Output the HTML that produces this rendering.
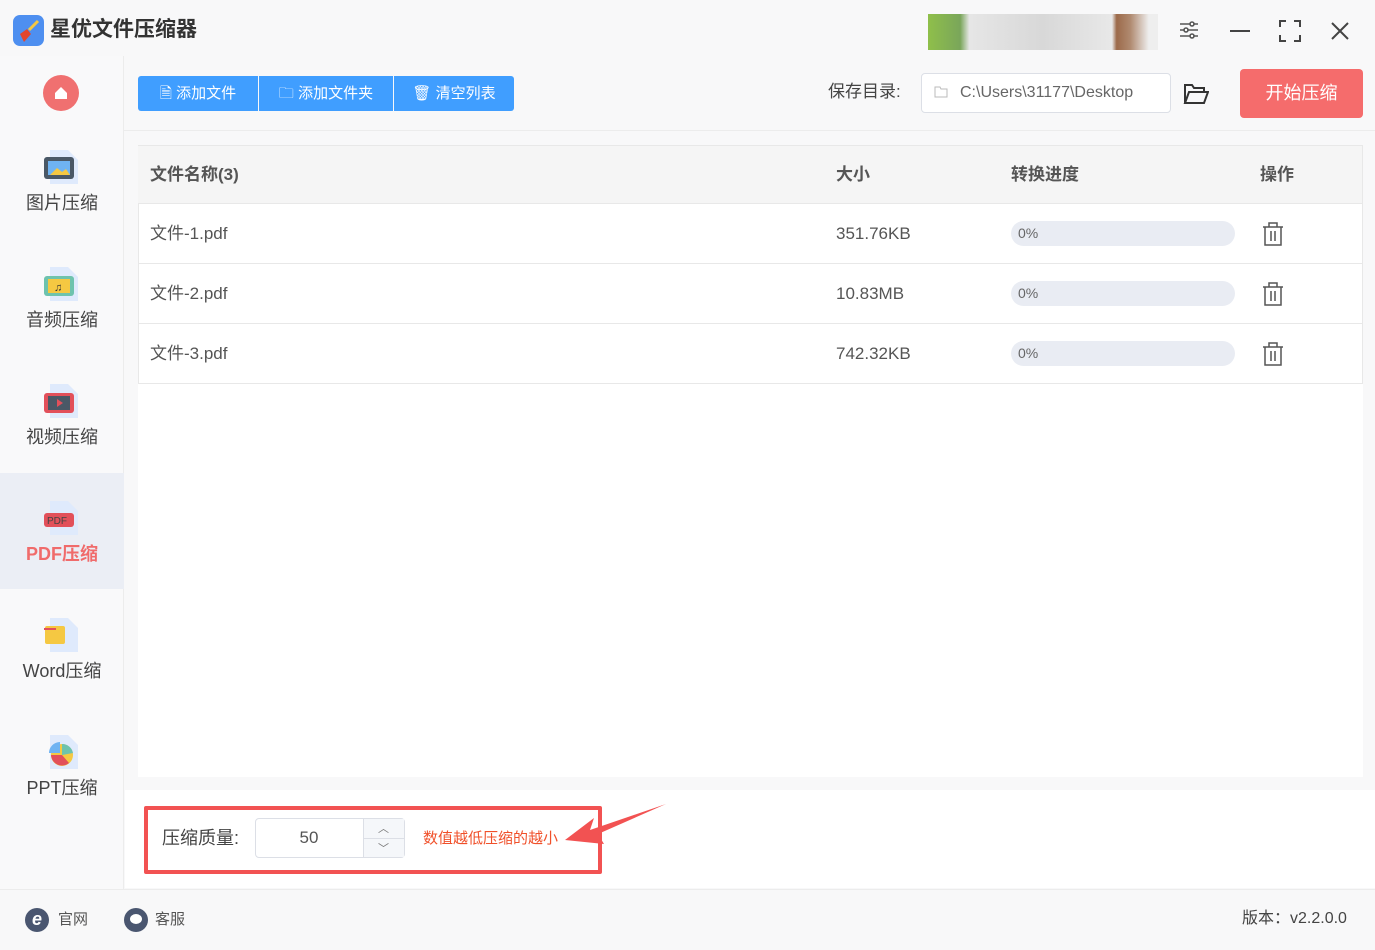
<!DOCTYPE html>
<html><head><meta charset="utf-8"><style>
*{margin:0;padding:0;box-sizing:border-box}
body{width:1375px;height:950px;overflow:hidden;background:#f8f8f9;font-family:"Liberation Sans","Noto Sans CJK SC",sans-serif;color:#333;position:relative}
.abs{position:absolute}
.side{left:0;top:56px;width:124px;height:834px;border-right:1px solid #ececec;background:#f9f9fa}
.nav{position:absolute;left:0;width:124px;height:116px;text-align:center;font-size:18px;color:#444}
.nav .lbl{position:absolute;left:0;right:0;top:67px;line-height:20px}
.ic{position:absolute;left:42px;top:22px;width:38px;height:38px}
.btn{top:76px;height:35px;background:#409eff;color:#fff;font-size:15px;line-height:35px;text-align:center}
.row{position:absolute;left:138px;width:1224px;height:60px;border-bottom:1px solid #e8e8e8;font-size:17px;color:#555}
.row span{position:absolute;top:20px;line-height:20px}
.bar{position:absolute;left:873px;top:17px;width:224px;height:25px;border-radius:13px;background:#e9ecf3;font-size:14px;color:#666;line-height:25px;padding-left:7px}
.trash{position:absolute;left:1124px;top:18px}
</style></head><body>
<div class="abs" style="left:13px;top:15px;width:31px;height:31px;border-radius:7px;background:#4e8ff0"></div>
<svg class="abs" style="left:15px;top:17px" width="28" height="28"><path d="M5 17 L12 12 L16 17 L9 25 Z" fill="#e2462f"/><path d="M14 13 L23 4" stroke="#f5c842" stroke-width="3"/></svg>
<div class="abs" style="left:50px;top:18px;font-size:21px;font-weight:bold;color:#333;line-height:24px">星优文件压缩器</div>
<div class="abs" style="left:928px;top:14px;width:230px;height:36px;background:linear-gradient(90deg,#8fbf4a 0,#7aa65a 14%,#e6e6e6 18%,#d8d8d8 50%,#e8e8e8 80%,#9c6a4a 82%,#b08a70 88%,#eee 96%)"></div>
<svg class="abs" style="left:1178px;top:19px" width="22" height="22" stroke="#555" stroke-width="1.6" fill="none"><path d="M2 5h18M2 11h18M2 17h18"/><circle cx="14" cy="5" r="2" fill="#fff"/><circle cx="8" cy="11" r="2" fill="#fff"/><circle cx="14" cy="17" r="2" fill="#fff"/></svg>
<div class="abs" style="left:1230px;top:30px;width:20px;height:2px;background:#444"></div>
<svg class="abs" style="left:1279px;top:20px" width="22" height="22" stroke="#444" stroke-width="2" fill="none"><path d="M1 7V1h6M15 1h6v6M21 15v6h-6M7 21H1v-6"/></svg>
<svg class="abs" style="left:1331px;top:22px" width="18" height="18" stroke="#444" stroke-width="2"><path d="M1 1l16 16M17 1L1 17"/></svg>
<div class="abs side">
<div class="abs" style="left:43px;top:19px;width:36px;height:36px;border-radius:50%;background:#f07070"></div>
<svg class="abs" style="left:54px;top:30px" width="14" height="14"><path d="M1 7L7 1l6 6v6H1z" fill="#fff"/></svg>
<div class="nav" style="top:70px"><svg class="ic"><path d="M8 2h18l10 10v24H8z" fill="#dfeafc"/><rect x="2" y="9" width="30" height="22" rx="3" fill="#4a5866"/><rect x="6" y="13" width="22" height="14" fill="#6fb3f2"/><path d="M8 27l7-7 5 4 4-3 4 6z" fill="#f5c842"/></svg><div class="lbl">图片压缩</div></div>
<div class="nav" style="top:187px"><svg class="ic"><path d="M8 2h18l10 10v24H8z" fill="#dfeafc"/><rect x="2" y="11" width="30" height="20" rx="3" fill="#6ec3ad"/><rect x="6" y="14" width="22" height="14" fill="#f5c842"/><text x="12" y="26" font-size="11" fill="#333">♫</text></svg><div class="lbl">音频压缩</div></div>
<div class="nav" style="top:304px"><svg class="ic"><path d="M8 2h18l10 10v24H8z" fill="#dfeafc"/><rect x="2" y="11" width="30" height="20" rx="3" fill="#e2505a"/><rect x="6" y="14" width="22" height="14" fill="#4a5866"/><path d="M15 17l6 4-6 4z" fill="#e2505a"/></svg><div class="lbl">视频压缩</div></div>
<div class="abs" style="left:0;top:417px;width:124px;height:116px;background:#ebeef5"></div>
<div class="nav" style="top:421px"><svg class="ic"><path d="M8 2h18l10 10v24H8z" fill="#dfeafc"/><rect x="2" y="14" width="30" height="14" rx="3" fill="#e2505a"/><text x="5" y="25" font-size="10" fill="#444">PDF</text></svg><div class="lbl" style="color:#f06b6b;font-weight:bold">PDF压缩</div></div>
<div class="nav" style="top:538px"><svg class="ic"><path d="M8 2h18l10 10v24H8z" fill="#dfeafc"/><rect x="3" y="10" width="20" height="18" rx="2" fill="#f5c842"/><path d="M2 13h12" stroke="#e2505a" stroke-width="2"/></svg><div class="lbl">Word压缩</div></div>
<div class="nav" style="top:655px"><svg class="ic"><path d="M8 2h18l10 10v24H8z" fill="#dfeafc"/><circle cx="20" cy="22" r="11" fill="#f5c842"/><path d="M20 22L9 22A11 11 0 0 0 27 30z" fill="#e2505a"/><path d="M20 22V11A11 11 0 0 1 31 20z" fill="#6ec3ad"/><path d="M18 20H7A11 11 0 0 1 18 9z" fill="#6fb3f2"/></svg><div class="lbl">PPT压缩</div></div>
</div>
<div class="abs btn" style="left:138px;width:120px;border-radius:3px 0 0 3px">🗎 添加文件</div>
<div class="abs btn" style="left:259px;width:134px">🗀 添加文件夹</div>
<div class="abs btn" style="left:394px;width:120px;border-radius:0 3px 3px 0">🗑 清空列表</div>
<div class="abs" style="left:124px;top:130px;width:1251px;height:1px;background:#ececec"></div>
<div class="abs" style="left:828px;top:82px;font-size:17px;color:#444;line-height:20px">保存目录:</div>
<div class="abs" style="left:921px;top:73px;width:250px;height:40px;border:1px solid #dcdfe6;border-radius:4px;background:#fff;font-size:16px;color:#666;line-height:38px;padding-left:38px">C:\Users\31177\Desktop</div>
<svg class="abs" style="left:934px;top:86px" width="14" height="12" stroke="#bbb" fill="none"><path d="M1 1h5l1 2h6v8H1z"/></svg>
<svg class="abs" style="left:1183px;top:83px" width="26" height="22" stroke="#333" stroke-width="2" fill="none"><path d="M2 20V2h7l2 3h10v4M2 20l4-11h19l-4 11z"/></svg>
<div class="abs" style="left:1240px;top:69px;width:123px;height:49px;background:#f56c6c;border-radius:4px;color:#fff;font-size:18px;text-align:center;line-height:49px">开始压缩</div>
<div class="abs" style="left:138px;top:145px;width:1225px;height:632px;background:#fff"></div>
<div class="abs" style="left:138px;top:145px;width:1225px;height:239px;border:1px solid #e8e8e8"></div>
<div class="row" style="top:146px;background:#f5f5f5;font-weight:bold;color:#555;height:58px">
<span style="left:12px;top:19px">文件名称(3)</span><span style="left:698px;top:19px">大小</span><span style="left:873px;top:19px">转换进度</span><span style="left:1122px;top:19px">操作</span></div>
<div class="abs" style="left:138px;top:203px;width:1225px;height:1px;background:#e8e8e8"></div>
<div class="row" style="top:204px"><span style="left:12px">文件-1.pdf</span><span style="left:698px">351.76KB</span><div class="bar">0%</div><svg class="trash" width="22" height="24" stroke="#555" stroke-width="1.5" fill="none"><path d="M1 5h20M7 5V1h8v4M3 5v18h16V5M9 9v10M13 9v10"/></svg></div>
<div class="row" style="top:264px"><span style="left:12px">文件-2.pdf</span><span style="left:698px">10.83MB</span><div class="bar">0%</div><svg class="trash" width="22" height="24" stroke="#555" stroke-width="1.5" fill="none"><path d="M1 5h20M7 5V1h8v4M3 5v18h16V5M9 9v10M13 9v10"/></svg></div>
<div class="row" style="top:324px"><span style="left:12px">文件-3.pdf</span><span style="left:698px">742.32KB</span><div class="bar">0%</div><svg class="trash" width="22" height="24" stroke="#555" stroke-width="1.5" fill="none"><path d="M1 5h20M7 5V1h8v4M3 5v18h16V5M9 9v10M13 9v10"/></svg></div>
<div class="abs" style="left:125px;top:790px;width:1250px;height:98px;background:#fff"></div>
<div class="abs" style="left:144px;top:806px;width:458px;height:68px;border:4px solid #f25252;border-radius:2px"></div>
<div class="abs" style="left:162px;top:828px;font-size:18px;color:#444;line-height:20px">压缩质量:</div>
<div class="abs" style="left:255px;top:818px;width:150px;height:40px;border:1px solid #dcdfe6;border-radius:4px;background:#fff"></div>
<div class="abs" style="left:255px;top:828px;width:108px;text-align:center;font-size:17px;color:#555;line-height:20px">50</div>
<div class="abs" style="left:363px;top:819px;width:41px;height:38px;background:#f5f7fa;border-left:1px solid #dcdfe6"></div>
<div class="abs" style="left:363px;top:838px;width:41px;height:1px;background:#dcdfe6"></div>
<div class="abs" style="left:378px;top:820px;font-size:11px;color:#777">︿</div>
<div class="abs" style="left:378px;top:840px;font-size:11px;color:#777">﹀</div>
<div class="abs" style="left:423px;top:830px;font-size:15px;color:#f0502a;line-height:18px">数值越低压缩的越小</div>
<svg class="abs" style="left:530px;top:800px" width="140" height="50"><path d="M136 4L60 30L64 18L35 40L74 44L68 34Z" fill="#f25252"/></svg>
<div class="abs" style="left:0;top:889px;width:1375px;height:1px;background:#ececec"></div>
<div class="abs" style="left:25px;top:908px;width:24px;height:24px;border-radius:50%;background:#4a5670;color:#fff;font-size:18px;font-style:italic;font-weight:bold;text-align:center;line-height:23px">e</div>
<div class="abs" style="left:58px;top:911px;font-size:15px;color:#555;line-height:18px">官网</div>
<div class="abs" style="left:124px;top:908px;width:24px;height:24px;border-radius:50%;background:#4a5670"></div>
<div class="abs" style="left:130px;top:914px;width:12px;height:10px;border-radius:50%;background:#fff"></div>
<div class="abs" style="left:155px;top:911px;font-size:15px;color:#555;line-height:18px">客服</div>
<div class="abs" style="left:1242px;top:910px;font-size:16px;color:#444;line-height:18px">版本：v2.2.0.0</div>
</body></html>
